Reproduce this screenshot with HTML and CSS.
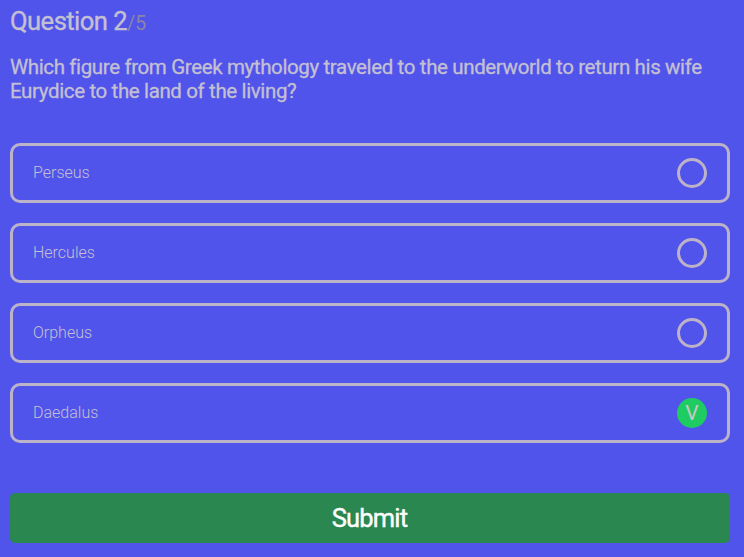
FILE: index.html
```html
<!DOCTYPE html>
<html lang="en">
<head>
<meta charset="utf-8">
<title>Quiz</title>
<link rel="stylesheet" href="styles.css">
</head>
<body>
<main class="quiz">
<h1 class="counter">Question 2<span class="total">/5</span></h1>
<h2 class="question">Which figure from Greek mythology traveled to the underworld to return his wife Eurydice to the land of the living?</h2>
<div class="answers">
<div class="answer"><span class="label">Perseus</span><span class="mark"></span></div>
<div class="answer"><span class="label">Hercules</span><span class="mark"></span></div>
<div class="answer"><span class="label">Orpheus</span><span class="mark"></span></div>
<div class="answer"><span class="label">Daedalus</span><span class="mark chosen">V</span></div>
</div>
<button class="submit">Submit</button>
</main>
</body>
</html>
```

FILE: styles.css
```css
* { box-sizing: border-box; }
body { margin: 0; background: #5054eb; color: #c4c0d2; font-family: Roboto, sans-serif; }
.quiz { padding: 6px 14px 0 10px; }
.counter { margin: 0; font-size: 25.6px; line-height: 30px; font-weight: 400; letter-spacing: -0.55px; -webkit-text-stroke: 0.35px; }
.total { font-size: 20px; color: #8a85a6; letter-spacing: -0.3px; -webkit-text-stroke: 0; }
.question { margin: 17px 0 0; font-size: 20.5px; line-height: 24px; font-weight: 400; letter-spacing: -0.37px; -webkit-text-stroke: 0.3px; }
.answers { display: grid; gap: 20px; margin-top: 40px; }
.answer { display: flex; align-items: center; justify-content: space-between; height: 60px; padding: 0 20px; border: 3px solid #bdb3c8; border-radius: 10px; font-size: 16px; font-weight: 300; }
.label { padding-bottom: 2px; }
.mark { width: 30px; height: 30px; border: 3px solid #bdb3c8; border-radius: 50%; }
.chosen { display: flex; align-items: center; justify-content: center; border: 0; background: #1fcc61; color: #c8c8c4; font-size: 21px; font-weight: 400; }
.submit { display: block; width: 100%; height: 50px; margin-top: 50px; padding: 0 1px 0 0; border: 0; border-radius: 5px; background: #29874f; color: #fff; font: 400 25.5px Roboto, sans-serif; letter-spacing: -0.85px; -webkit-text-stroke: 0.4px; }
```
